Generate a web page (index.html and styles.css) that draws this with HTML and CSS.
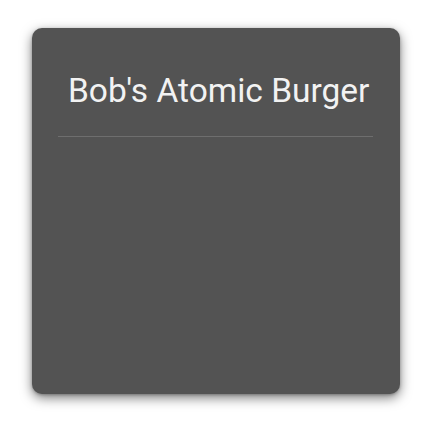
FILE: index.html
```html
<!DOCTYPE html>
<html>
<head>
<meta charset="utf-8">
<link rel="stylesheet" href="styles.css">
</head>
<body>
<div class="card">
  <div class="title">Bob's Atomic Burger</div>
  <div class="divider"></div>
  <div class="body"></div>
</div>
</body>
</html>
```

FILE: styles.css
```css
html, body {
  margin: 0;
  padding: 0;
  background: #ffffff;
}
body {
  width: 432px;
  height: 432px;
  padding: 28px 32px 0 32px;
  box-sizing: border-box;
}
.card {
  width: 368px;
  height: 366px;
  background: #535353;
  border-radius: 10px;
  box-shadow: 0 4px 12px rgba(0,0,0,0.5), 0 1px 3px rgba(0,0,0,0.25);
  padding: 0 27px 0 26px;
  box-sizing: border-box;
  display: flex;
  flex-direction: column;
}
.title {
  font-family: Roboto, "Noto Sans", sans-serif;
  font-size: 33.5px;
  color: #f2f2f2;
  padding: 43px 0 0 10px;
  line-height: 40px;
  white-space: nowrap;
}
.divider {
  margin-top: 25px;
  height: 1px;
  background: #6e6e6e;
}
.body {
  flex: 1;
}
```
